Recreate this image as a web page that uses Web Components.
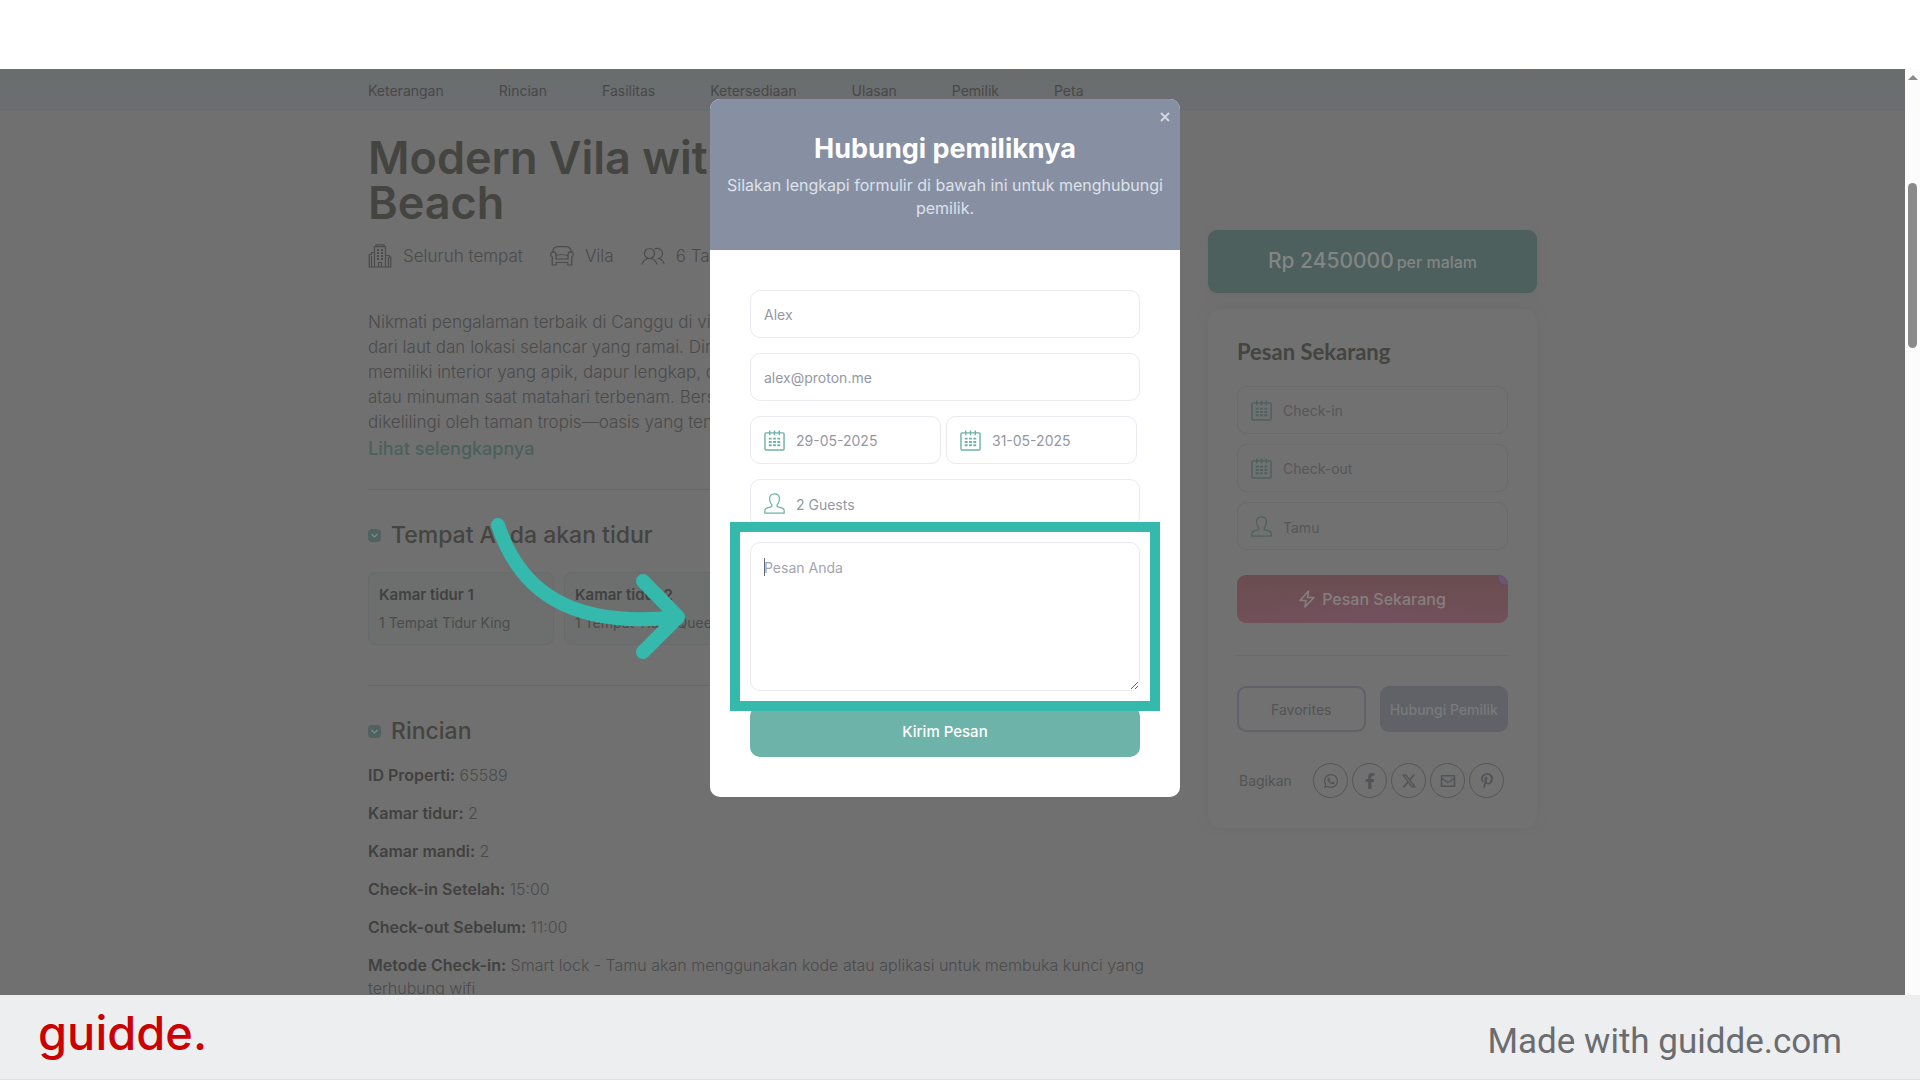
<!DOCTYPE html>
<html lang="id">
<head>
  <meta charset="utf-8">
  <meta name="viewport" content="width=device-width, initial-scale=1">
  <title>Hubungi pemiliknya</title>
  <style>
    body {
      margin: 0;
      height: 100vh;
      display: flex;
      flex-direction: column;
      overflow: hidden;
      background: white;
      font-family: Inter, "Liberation Sans", sans-serif;
      padding-top: 69px;
      box-sizing: border-box;
    }
  </style>
</head>
<body>
  <app-stage>
    <section-nav></section-nav>
    <villa-details></villa-details>
    <booking-card slot="aside"></booking-card>
    <contact-dialog slot="dialog"></contact-dialog>
  </app-stage>
  <brand-footer></brand-footer>

  <script>
    const icons = {
      building: {
        box: '0 0 24 24',
        body: '<g fill="none" stroke="currentColor" stroke-width="1.2"><path d="M6.5 23V2.6h11V23M8 2.500V.8h8v1.700M6.500 8.500H3.500v2H1.200V23h21.600V13h-1.300v-1.500h-4M3.500 12v11M20.500 13v10M10.500 23v-4.500h3V23"/><path d="M9 6h2M13 6h2M9 9h2M13 9h2M9 12h2M13 12h2M9 15h2M13 15h2" stroke-width="1.800"/></g>'
      },
      armchair: {
        box: '0 0 24 24',
        body: '<g fill="none" stroke="currentColor" stroke-width="1.2" stroke-linejoin="round"><path d="M3 8C2.500 4.500 5 2.600 8 2.600h8c3 0 5.500 1.900 5 5.400"/><path d="M6 15V10.500C6 8.800 4.800 7.800 3.300 7.800 1.700 7.800.7 9 .7 10.400c0 1.200.6 2 1.500 2.400V21h4v-2.500h11.600V21h4v-8.200c.9-.4 1.500-1.200 1.500-2.400 0-1.400-1-2.600-2.600-2.600-1.500 0-2.700 1-2.700 2.700V15z"/><path d="M6 11.500c3-1 9-1 12 0"/></g>'
      },
      guests: {
        box: '0 0 24 24',
        body: '<g fill="none" stroke="currentColor" stroke-width="1.2" stroke-linecap="round"><circle cx="8.500" cy="9.500" r="5"/><path d="M1 20c1.500-3.500 4.300-5.500 7.500-5.500S14.500 16.500 16 20M14 4.800c3.500-1.500 7.500 1 7.500 4.700 0 2.800-2.200 5-5 5 2.800 0 5.300 2 6.500 5"/></g>'
      },
      calendar: {
        box: '0 0 22 22',
        body: '<rect x="1" y="3" width="20" height="18" rx="1" fill="none" stroke="currentColor" stroke-width="1.500"/><path d="M6 .5v5M11 .5v5M16 .5v5" stroke="currentColor" stroke-width="1.500"/><path d="M5 9h12M5 12.500h12M5 16h12" stroke="currentColor" stroke-width="2" stroke-dasharray="3 1.500"/>'
      },
      person: {
        box: '0 0 22 22',
        body: '<path d="M8.200 12.300C6.300 10.500 5.800 8.500 5.800 6c0-3 2-5.200 5.200-5.200S16.200 3 16.200 6c0 2.500-.5 4.500-2.400 6.300v2l5.400 1.500c1.400.5 1.900 1.200 1.900 2.400v3H.9v-3c0-1.200.5-1.900 1.900-2.400l5.400-1.500z" fill="none" stroke="currentColor" stroke-width="1.300"/>'
      },
      bolt: {
        box: '0 0 16 18',
        body: '<path d="M9.500 1 1 10.500h6L6 17l9-9.500H8.500z" fill="none" stroke="currentColor" stroke-width="1.600" stroke-linejoin="round"/>'
      },
      chevron: {
        box: '0 0 13 13',
        body: '<path d="M3.500 5l3 3 3-3" fill="none" stroke="#7c8c89" stroke-width="1.200"/>'
      },
      close: {
        box: '0 0 10 10',
        body: '<path d="M1 1l8 8M9 1l-8 8" stroke="currentColor" stroke-width="1.800"/>'
      },
      whatsapp: {
        box: '0 0 448 512',
        body: '<path fill="currentColor" d="M380.900 97.100C339 55.100 283.200 32 223.900 32c-122.400 0-222 99.600-222 222 0 39.100 10.200 77.300 29.600 111L0 480l117.700-30.900c32.400 17.700 68.900 27 106.100 27h.1c122.300 0 224.100-99.600 224.100-222 0-59.300-25.200-115-67.100-157zm-157 341.600c-33.200 0-65.700-8.900-94-25.700l-6.700-4-69.800 18.300L72 359.200l-4.400-7c-18.500-29.400-28.200-63.300-28.200-98.200 0-101.700 82.800-184.500 184.600-184.500 49.300 0 95.600 19.200 130.400 54.100 34.800 34.900 56.200 81.200 56.100 130.500 0 101.800-84.900 184.600-186.600 184.600zm101.200-138.200c-5.500-2.800-32.800-16.200-37.900-18-5.100-1.900-8.800-2.800-12.500 2.800-3.700 5.600-14.300 18-17.600 21.800-3.200 3.700-6.500 4.200-12 1.400-32.600-16.300-54-29.100-75.500-66-5.700-9.800 5.700-9.100 16.300-30.300 1.800-3.700.9-6.900-.5-9.700-1.400-2.800-12.500-30.100-17.100-41.200-4.500-10.800-9.100-9.300-12.500-9.500-3.200-.2-6.900-.2-10.600-.2-3.700 0-9.700 1.400-14.800 6.900-5.100 5.600-19.400 19-19.400 46.300 0 27.300 19.900 53.700 22.600 57.400 2.800 3.700 39.100 59.700 94.800 83.800 35.200 15.200 49 16.500 66.600 13.900 10.700-1.600 32.800-13.400 37.400-26.400 4.600-13 4.600-24.100 3.200-26.400-1.300-2.500-5-3.900-10.500-6.600z"/>'
      },
      facebook: {
        box: '0 0 320 512',
        body: '<path fill="currentColor" d="M279.140 288l14.220-92.660h-88.910v-60.130c0-25.350 12.420-50.060 52.240-50.060h40.420V6.260S260.430 0 225.360 0c-73.220 0-121.080 44.380-121.080 124.720v70.620H22.890V288h81.390v224h100.170V288z"/>'
      },
      x: {
        box: '0 0 512 512',
        body: '<path fill="currentColor" d="M389.200 48h70.600L305.600 224.200 487 464H345L233.700 318.600 106.500 464H35.800L200.700 275.500 26.800 48H172.400L272.900 180.900 389.200 48zM364.400 421.800h39.100L151.100 88h-42L364.400 421.800z"/>'
      },
      mail: {
        box: '0 0 16 16',
        body: '<path d="M1.500 2.800h13v10.400h-13zM1.500 5l5.500 4c.6.500 1.400.5 2 0l5.500-4" fill="none" stroke="currentColor" stroke-width="1.500" stroke-linejoin="round"/>'
      },
      pinterest: {
        box: '0 0 384 512',
        body: '<path fill="currentColor" d="M204 6.500C101.400 6.500 0 74.900 0 185.600 0 256 39.600 296 63.600 296c9.900 0 15.600-27.600 15.600-35.400 0-9.300-23.700-29.100-23.700-67.800 0-80.400 61.200-137.400 140.400-137.400 68.100 0 118.500 38.700 118.500 109.800 0 53.100-21.300 152.700-90.300 152.700-24.900 0-46.200-18-46.200-43.800 0-37.800 26.400-74.400 26.400-113.400 0-66.200-93.900-54.200-93.900 25.800 0 16.800 2.100 35.400 9.600 50.700-13.800 59.400-42 147.900-42 209.100 0 18.900 2.700 37.500 4.500 56.400 3.400 3.800 1.700 3.400 6.900 1.500 50.400-69 48.600-82.500 71.400-172.800 12.300 23.400 44.100 36 69.300 36 106.200 0 153.900-103.500 153.900-196.800C384 71.300 298.200 6.500 204 6.500z"/>'
      }
    }

    class UiIcon extends HTMLElement {
      constructor () {
        super()
        this.shadow = this.attachShadow({ mode: 'open' })
      }

      connectedCallback () {
        const icon = icons[this.getAttribute('name')]

        this.shadow.innerHTML =
          /* html */`
          <style>
            :host {
              display: block;
              flex: none;
              width: 16px;
              height: 16px;
            }

            svg {
              display: block;
              width: 100%;
              height: 100%;
            }
          </style>
          <svg viewBox="${icon.box}" aria-hidden="true">${icon.body}</svg>
          `
      }
    }

    customElements.define('ui-icon', UiIcon)

    // Text box with an optional icon at its left
    class FormField extends HTMLElement {
      constructor () {
        super()
        this.shadow = this.attachShadow({ mode: 'open' })
      }

      connectedCallback () {
        const icon = this.getAttribute('icon')
        const label = this.getAttribute('label')
        const value = this.getAttribute('value') || ''

        this.shadow.innerHTML =
          /* html */`
          <style>
            :host {
              display: block;
              min-width: 0;
            }

            label {
              display: flex;
              align-items: center;
              gap: 11px;
              height: 48px;
              box-sizing: border-box;
              padding: 0 13px;
              border: 1px solid var(--field-border, #e9e9f1);
              border-radius: 10px;
              color: var(--field-icon, #6db3a9);
            }

            ui-icon {
              width: 21px;
              height: 21px;
            }

            input {
              flex: 1;
              width: 0;
              padding: 2px 0 0;
              border: none;
              outline: none;
              background: none;
              color: var(--field-text, #9598a3);
              font: 14px/20px Inter, sans-serif;
            }

            ui-icon[name="person"] + input {
              padding-top: 4px;
            }

            input::placeholder {
              color: inherit;
            }
          </style>
          <label>
            ${icon ? `<ui-icon name="${icon}"></ui-icon>` : ''}
            <input type="text" aria-label="${label}" placeholder="${label}" value="${value}">
          </label>
          `
      }
    }

    customElements.define('form-field', FormField)

    class AppStage extends HTMLElement {
      constructor () {
        super()
        this.shadow = this.attachShadow({ mode: 'open' })
      }

      connectedCallback () {
        this.shadow.innerHTML =
          /* html */`
          <style>
            :host {
              display: flex;
              flex: 1;
              min-height: 0;
              overflow: hidden;
            }

            .page {
              position: relative;
              flex: 1;
              min-width: 0;
              background: #707070;
              color: #4b4b4b;
            }

            .nav-bar {
              height: 42px;
              background: linear-gradient(#6a6d6c, #6b6d70 60%);
            }

            .content {
              display: grid;
              grid-template-columns: minmax(0, 1fr) 329px;
              gap: 42px;
              max-width: 1169px;
              margin: -42px auto 0;
            }

            .dialog-layer {
              position: absolute;
              inset: 0;
              display: flex;
              justify-content: center;
              align-items: flex-start;
              padding: 30px 15px 0 0;
            }

            .scrollbar {
              flex: none;
              width: 15px;
              background: #fcfcfc;
              display: flex;
              flex-direction: column;
              align-items: center;
              gap: 103px;
              padding-top: 6px;
              box-sizing: border-box;
            }

            .up {
              border: 5px solid transparent;
              border-top: none;
              border-bottom-color: #8a8a8a;
            }

            .thumb {
              width: 9px;
              height: 165px;
              border-radius: 5px;
              background: #8a8a8a;
            }
          </style>
          <div class="page">
            <div class="nav-bar"></div>
            <div class="content">
              <main><slot></slot></main>
              <slot name="aside"></slot>
            </div>
            <div class="dialog-layer"><slot name="dialog"></slot></div>
          </div>
          <div class="scrollbar"><div class="up"></div><div class="thumb"></div></div>
          `
      }
    }

    customElements.define('app-stage', AppStage)

    class SectionNav extends HTMLElement {
      constructor () {
        super()
        this.shadow = this.attachShadow({ mode: 'open' })
        this.links = ['Keterangan', 'Rincian', 'Fasilitas', 'Ketersediaan', 'Ulasan', 'Pemilik', 'Peta']
      }

      connectedCallback () {
        this.shadow.innerHTML =
          /* html */`
          <style>
            :host {
              display: block;
              height: 42px;
            }

            nav {
              display: flex;
              gap: 55px;
              padding-top: 12px;
              font-size: 14px;
              line-height: 20px;
            }

            a {
              color: #484848;
              text-decoration: none;
            }
          </style>
          <nav></nav>
          `

        const nav = this.shadow.querySelector('nav')

        this.links.forEach(text => {
          const link = document.createElement('a')
          link.href = '#'
          link.textContent = text
          nav.appendChild(link)
        })
      }
    }

    customElements.define('section-nav', SectionNav)

    class VillaDetails extends HTMLElement {
      constructor () {
        super()
        this.shadow = this.attachShadow({ mode: 'open' })
        this.details = [
          ['ID Properti:', '65589'],
          ['Kamar tidur:', '2'],
          ['Kamar mandi:', '2'],
          ['Check-in Setelah:', '15:00'],
          ['Check-out Sebelum:', '11:00'],
          ['Metode Check-in:', 'Smart lock - Tamu akan menggunakan kode atau aplikasi untuk membuka kunci yang terhubung wifi']
        ]
      }

      connectedCallback () {
        this.shadow.innerHTML =
          /* html */`
          <style>
            :host {
              display: block;
              padding-top: 24px;
            }

            h1, h2, h3, p {
              margin: 0;
            }

            h1 {
              color: #444440;
              font-size: 45px;
              font-weight: 600;
              line-height: 45px;
            }

            .facts {
              display: flex;
              gap: 27px;
              margin-top: 19px;
              font-size: 17px;
              font-weight: 300;
              line-height: 24px;
            }

            .facts span {
              display: flex;
              gap: 11px;
            }

            .facts ui-icon {
              width: 24px;
              height: 24px;
            }

            .about {
              margin-top: 42px;
              font-size: 17px;
              font-weight: 300;
              line-height: 25px;
              white-space: nowrap;
            }

            a {
              display: block;
              color: #4a605c;
              font-size: 18px;
              font-weight: 500;
              line-height: 28px;
              text-decoration: none;
            }

            hr {
              height: 1px;
              margin: 26px 0 0;
              border: none;
              background: #686868;
            }

            h2 {
              display: flex;
              align-items: center;
              gap: 10px;
              margin-top: 30px;
              color: #444440;
              font-size: 23px;
              font-weight: 500;
              line-height: 30px;
            }

            h2 ui-icon {
              width: 13px;
              height: 13px;
              border-radius: 4px;
              background: #50625f;
            }

            .rooms {
              display: flex;
              gap: 10px;
              margin: 22px 0 40px;
            }

            .room {
              width: 186px;
              height: 73px;
              box-sizing: border-box;
              padding: 9px 10px;
              border: 1px solid #686b6b;
              border-radius: 8px;
              background: #6c6f6e;
              white-space: nowrap;
            }

            h3 {
              color: #414141;
              font-size: 15px;
              font-weight: 600;
              line-height: 26px;
            }

            .room p {
              font-size: 14px;
              line-height: 30px;
            }

            dl {
              display: flex;
              flex-direction: column;
              gap: 15px;
              margin: 18px 0 0;
              font-size: 16px;
              line-height: 23px;
            }

            dt, dd {
              display: inline;
              margin: 0;
            }

            dt {
              color: #414141;
              font-weight: 600;
            }

            dd {
              font-weight: 300;
            }
          </style>
          <h1>Modern Vila with<br>Beach</h1>
          <div class="facts">
            <span><ui-icon name="building"></ui-icon>Seluruh tempat</span>
            <span><ui-icon name="armchair"></ui-icon>Vila</span>
            <span><ui-icon name="guests"></ui-icon>6 Tamu</span>
          </div>
          <p class="about">
            Nikmati pengalaman terbaik di Canggu di vila<br>
            dari laut dan lokasi selancar yang ramai. Dirancang<br>
            memiliki interior yang apik, dapur lengkap, dan<br>
            atau minuman saat matahari terbenam. Bersantai<br>
            dikelilingi oleh taman tropis—oasis yang tenang
          </p>
          <a href="#">Lihat selengkapnya</a>
          <hr>
          <h2><ui-icon name="chevron"></ui-icon>Tempat Anda akan tidur</h2>
          <div class="rooms">
            <div class="room">
              <h3>Kamar tidur 1</h3>
              <p>1 Tempat Tidur King</p>
            </div>
            <div class="room">
              <h3>Kamar tidur 2</h3>
              <p>1 Tempat Tidur Queen</p>
            </div>
          </div>
          <hr>
          <h2><ui-icon name="chevron"></ui-icon>Rincian</h2>
          <dl></dl>
          `

        const list = this.shadow.querySelector('dl')

        this.details.forEach(([name, value]) => {
          const row = document.createElement('div')
          const term = document.createElement('dt')
          term.textContent = name
          const data = document.createElement('dd')
          data.textContent = value
          row.append(term, ' ', data)
          list.appendChild(row)
        })
      }
    }

    customElements.define('villa-details', VillaDetails)

    class BookingCard extends HTMLElement {
      constructor () {
        super()
        this.shadow = this.attachShadow({ mode: 'open' })
      }

      connectedCallback () {
        this.shadow.innerHTML =
          /* html */`
          <style>
            :host {
              display: flex;
              flex-direction: column;
              gap: 16px;
              padding-top: 161px;
              --field-border: #6a6a6c;
              --field-icon: #4d615e;
              --field-text: #565658;
            }

            .price {
              display: flex;
              justify-content: center;
              align-items: baseline;
              gap: 3px;
              border-radius: 9px;
              background: #4d605d;
              box-shadow: 0 2px 6px #6c6c6c;
              color: #838584;
              font-size: 21px;
              font-weight: 500;
              line-height: 62px;
            }

            .price small {
              font-size: 16px;
            }

            .card {
              display: flex;
              flex-direction: column;
              gap: 10px;
              padding: 30px 29px;
              border-radius: 12px;
              background: #717171;
              box-shadow: 0 0 8px #6c6c6c;
            }

            h2 {
              margin: 0 0 11px;
              color: #444440;
              font: 700 22px/26px Lato, sans-serif;
            }

            button {
              box-sizing: border-box;
              padding: 0;
              border: none;
              border-radius: 9px;
              font-family: inherit;
            }

            .book {
              position: relative;
              display: flex;
              justify-content: center;
              align-items: center;
              gap: 7px;
              height: 48px;
              margin-top: 15px;
              overflow: hidden;
              background: radial-gradient(ellipse at 50% 110%, #74505e, transparent 60%), linear-gradient(#6a4d50, #71505a);
              color: #85807f;
              font-size: 16px;
              font-weight: 500;
            }

            .book::after {
              content: "";
              position: absolute;
              top: -5px;
              right: -5px;
              width: 15px;
              height: 15px;
              border-radius: 50%;
              background: #6b5573;
              box-shadow: 0 0 1px #503b5c;
            }

            .book ui-icon {
              height: 18px;
            }

            hr {
              width: 100%;
              height: 1px;
              margin: 22px 0 20px;
              border: none;
              background: #6a6a6a;
            }

            .actions {
              display: grid;
              grid-template-columns: 1fr 1fr;
              gap: 14px;
            }

            .actions button {
              height: 46px;
              background: none;
              border: 2px solid #606267;
              color: #515356;
              font-size: 14px;
            }

            .actions .owner {
              background: #606267;
              color: #787a7c;
              font-weight: 500;
            }

            .share {
              display: flex;
              align-items: center;
              gap: 4px;
              margin-top: 21px;
              padding: 0 4px 0 2px;
              color: #515356;
              font-size: 14px;
            }

            .share span {
              margin-right: auto;
            }

            .share a {
              display: flex;
              justify-content: center;
              align-items: center;
              width: 35px;
              height: 35px;
              box-sizing: border-box;
              border: 1px solid #565658;
              border-radius: 50%;
              color: #515356;
            }
          </style>
          <div class="price">Rp 2450000 <small>per malam</small></div>
          <div class="card">
            <h2>Pesan Sekarang</h2>
            <form-field icon="calendar" label="Check-in"></form-field>
            <form-field icon="calendar" label="Check-out"></form-field>
            <form-field icon="person" label="Tamu"></form-field>
            <button class="book" type="button"><ui-icon name="bolt"></ui-icon>Pesan Sekarang</button>
            <hr>
            <div class="actions">
              <button type="button">Favorites</button>
              <button class="owner" type="button">Hubungi Pemilik</button>
            </div>
            <div class="share">
              <span>Bagikan</span>
              <a href="#" aria-label="WhatsApp"><ui-icon name="whatsapp"></ui-icon></a>
              <a href="#" aria-label="Facebook"><ui-icon name="facebook"></ui-icon></a>
              <a href="#" aria-label="X"><ui-icon name="x"></ui-icon></a>
              <a href="#" aria-label="Email"><ui-icon name="mail"></ui-icon></a>
              <a href="#" aria-label="Pinterest"><ui-icon name="pinterest"></ui-icon></a>
            </div>
          </div>
          `
      }
    }

    customElements.define('booking-card', BookingCard)

    class ContactDialog extends HTMLElement {
      constructor () {
        super()
        this.shadow = this.attachShadow({ mode: 'open' })
      }

      connectedCallback () {
        this.shadow.innerHTML =
          /* html */`
          <style>
            :host {
              display: block;
              position: relative;
              width: 470px;
              border-radius: 10px;
              background: white;
            }

            header {
              position: relative;
              padding: 34px 0 30px;
              border-radius: 10px 10px 0 0;
              background: #8790a3;
              text-align: center;
            }

            h2 {
              margin: 0 0 10px;
              color: white;
              font-size: 27px;
              font-weight: 700;
              line-height: 31px;
            }

            p {
              margin: 0;
              color: #dde1ea;
              font-size: 16px;
              line-height: 23px;
            }

            .close {
              position: absolute;
              top: 8px;
              right: 5px;
              padding: 5px;
              border: none;
              background: none;
              color: #d5d9e1;
            }

            .close ui-icon {
              width: 10px;
              height: 10px;
            }

            form {
              display: flex;
              flex-direction: column;
              gap: 15px;
              padding: 40px;
            }

            .dates {
              display: grid;
              grid-template-columns: 1fr 1fr;
              gap: 5px;
              padding-right: 3px;
            }

            .message {
              position: relative;
            }

            /* highlight frame round the message box */
            .message::after {
              content: "";
              position: absolute;
              inset: -20px;
              border: 10px solid #34b9ac;
              pointer-events: none;
            }

            .message::before {
              content: "";
              position: absolute;
              top: 16px;
              left: 14px;
              width: 1px;
              height: 18px;
              background: #60687c;
            }

            textarea {
              display: block;
              width: 100%;
              height: 149px;
              box-sizing: border-box;
              padding: 15px 13px;
              border: 1px solid #e9e9f1;
              border-radius: 10px;
              outline: none;
              background: none;
              color: #9598a3;
              font: 14px/20px Inter, sans-serif;
            }

            textarea::placeholder {
              color: #a2a5af;
            }

            .send {
              height: 51px;
              padding: 0;
              border: none;
              border-radius: 10px;
              background: #6db3a9;
              color: white;
              font: 500 15px/20px Inter, sans-serif;
            }

            .arrow {
              position: absolute;
              top: 418px;
              left: -220px;
              width: 205px;
              height: 150px;
              pointer-events: none;
            }
          </style>
          <header>
            <h2>Hubungi pemiliknya</h2>
            <p>Silakan lengkapi formulir di bawah ini untuk menghubungi<br>pemilik.</p>
            <button class="close" type="button" aria-label="Tutup"><ui-icon name="close"></ui-icon></button>
          </header>
          <form>
            <form-field label="Nama" value="Alex"></form-field>
            <form-field label="Email" value="alex@proton.me"></form-field>
            <div class="dates">
              <form-field icon="calendar" label="Check-in" value="29-05-2025"></form-field>
              <form-field icon="calendar" label="Check-out" value="31-05-2025"></form-field>
            </div>
            <form-field icon="person" label="Tamu" value="2 Guests"></form-field>
            <div class="message">
              <textarea aria-label="Pesan Anda" placeholder="Pesan Anda"></textarea>
            </div>
            <button class="send" type="button">Kirim Pesan</button>
          </form>
          <svg class="arrow" viewBox="0 0 205 150" aria-hidden="true">
            <path d="M8 8C30 75 82 112 188 100M153 64l35 36-35 35" fill="none" stroke="#34b9ac" stroke-width="14" stroke-linecap="round" stroke-linejoin="round"/>
          </svg>
          `
      }
    }

    customElements.define('contact-dialog', ContactDialog)

    class BrandFooter extends HTMLElement {
      constructor () {
        super()
        this.shadow = this.attachShadow({ mode: 'open' })
      }

      connectedCallback () {
        this.shadow.innerHTML =
          /* html */`
          <style>
            :host {
              display: flex;
              justify-content: space-between;
              align-items: center;
              flex: none;
              height: 85px;
              box-sizing: border-box;
              padding: 0 78px 0 38px;
              border-bottom: 1px solid #e0e0e1;
              background: #edeef0;
            }

            .logo {
              padding-bottom: 8px;
              color: #cb0000;
              font-size: 47px;
              font-weight: 500;
              line-height: 60px;
            }

            .credit {
              padding-top: 10px;
              color: #6a6c6f;
              font: 35px/42px Roboto, sans-serif;
            }
          </style>
          <div class="logo">guidde.</div>
          <div class="credit">Made with guidde.com</div>
          `
      }
    }

    customElements.define('brand-footer', BrandFooter)
  </script>
</body>
</html>
